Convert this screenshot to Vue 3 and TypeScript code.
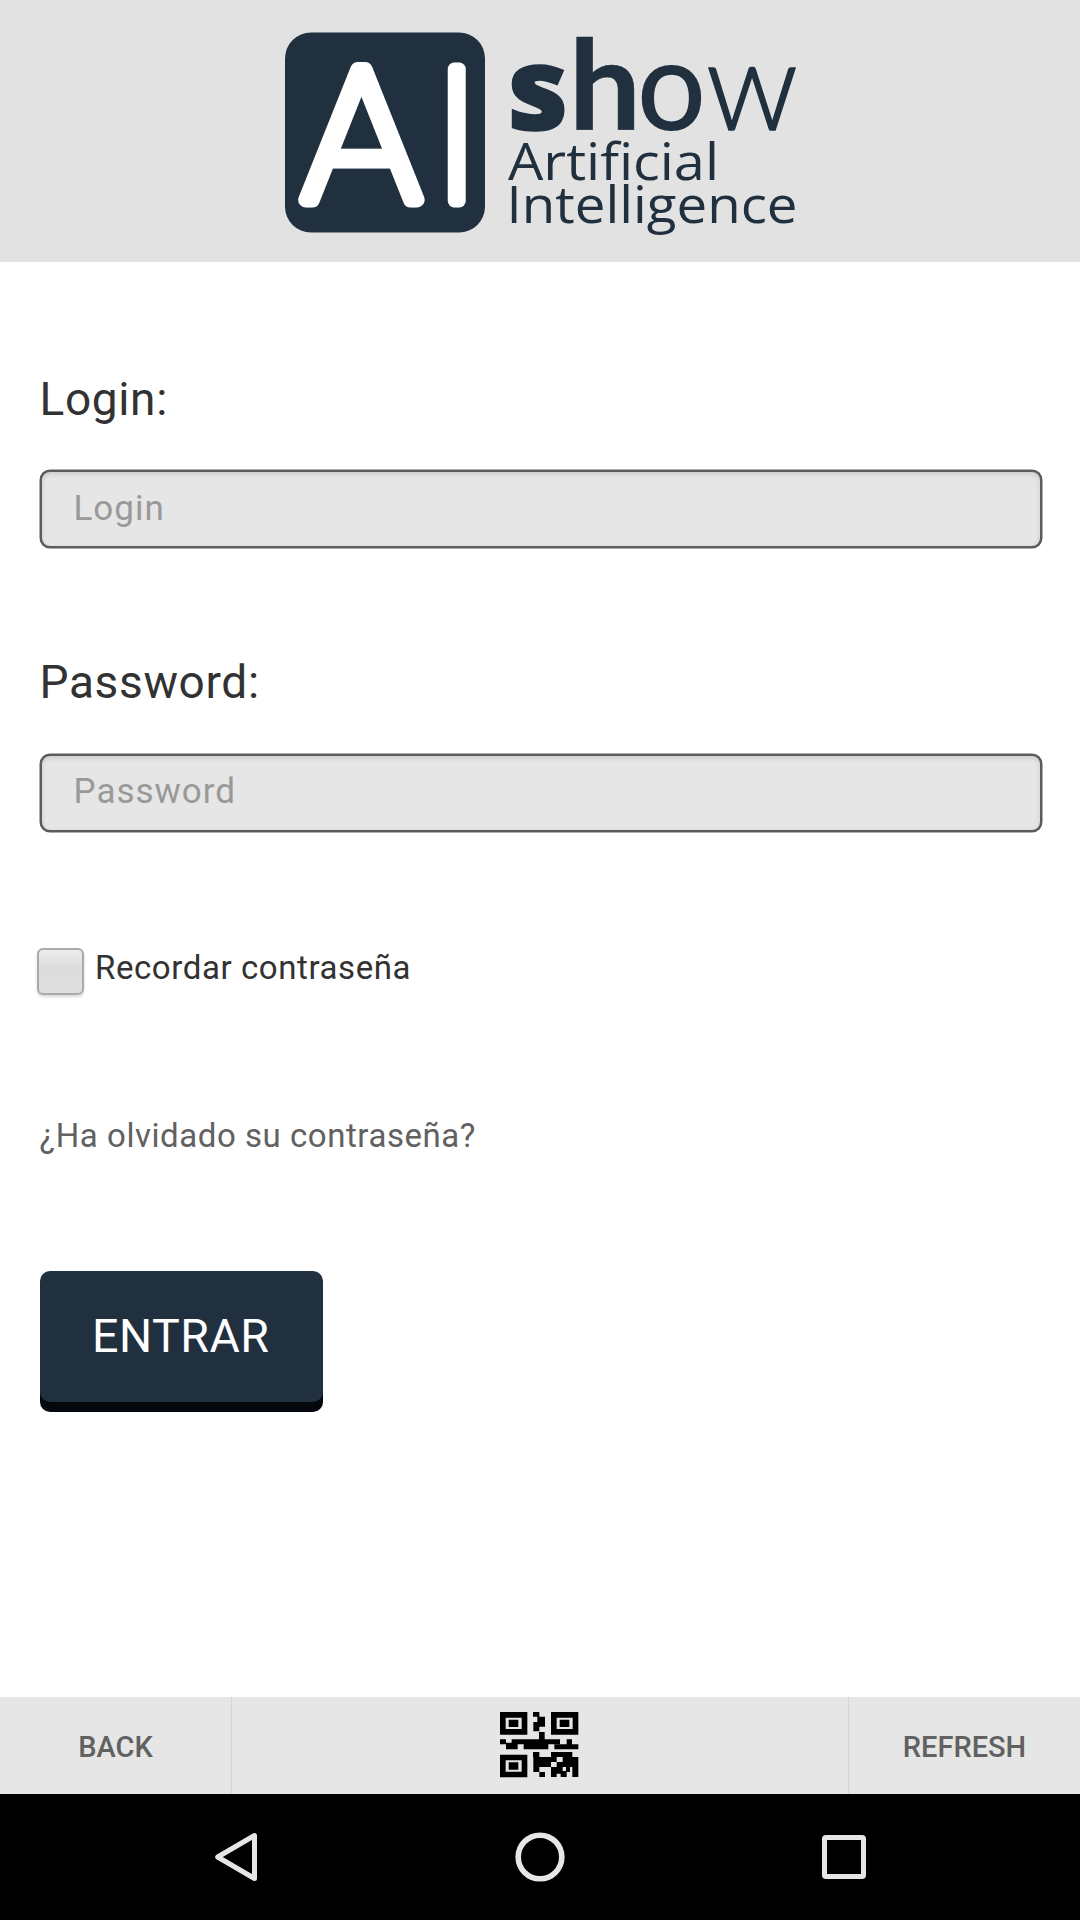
<script setup lang="ts">
import { ref } from 'vue'

interface Field {
  id: string
  label: string
  type: string
}

const fields: Field[] = [
  { id: 'login', label: 'Login', type: 'text' },
  { id: 'password', label: 'Password', type: 'password' },
]
const values = ref<Record<string, string>>({ login: '', password: '' })
const remember = ref(false)
</script>

<template>
  <div class="screen">
    <header class="header">
      <svg class="logo" width="520" height="220" viewBox="280 20 520 220">
        <rect x="285" y="32.500" width="200" height="200" rx="26" fill="#20303f" />
        <g class="mark">
          <text class="mark-a" x="303" y="199.500" font-size="184" textLength="117" lengthAdjust="spacingAndGlyphs">A</text>
          <text x="432.500" y="200.500" font-size="186">I</text>
        </g>
        <g class="word">
          <text class="heavy" x="507.500" y="129.500" font-weight="800" textLength="61" lengthAdjust="spacingAndGlyphs">s</text>
          <text class="tall" x="569" y="130" font-weight="700" textLength="72" lengthAdjust="spacingAndGlyphs">h</text>
          <text x="637" y="130" font-weight="500" textLength="69" lengthAdjust="spacingAndGlyphs">o</text>
          <text class="thin" x="706" y="130" font-weight="300" textLength="92" lengthAdjust="spacingAndGlyphs">w</text>
        </g>
        <g class="sub">
          <text x="508" y="180" textLength="211" lengthAdjust="spacingAndGlyphs">Artificial</text>
          <text x="506.500" y="223" textLength="291" lengthAdjust="spacingAndGlyphs">Intelligence</text>
        </g>
      </svg>
    </header>

    <form class="form" @submit.prevent>
      <div v-for="f in fields" :key="f.id" class="field">
        <label class="label" :for="f.id">{{ f.label }}:</label>
        <input :id="f.id" v-model="values[f.id]" class="input" :type="f.type" :placeholder="f.label" />
      </div>
      <label class="remember">
        <input v-model="remember" class="check" type="checkbox" />
        <span>Recordar contraseña</span>
      </label>
      <a class="forgot">¿Ha olvidado su contraseña?</a>
      <button class="submit" type="submit">ENTRAR</button>
    </form>

    <footer class="toolbar">
      <button class="tool left" type="button">BACK</button>
      <div class="middle">
        <svg width="79" height="66" viewBox="60 66 237 198">
          <g fill="none" stroke="#000">
            <path stroke-width="17" d="M68.500 74.500h65v51h-65zM221.500 74.500h65v51h-65zM68.500 202.500h65v51h-65z" />
          </g>
          <path d="M86 89h29v22H86zM239 89h29v22h-29zM86 217h29v22H86z" />
          <path d="M159 66h19v14h17v30h-17v14h-18V96h12V80h-13z" />
          <path d="M177 126h17v22h46v15h-35v15h-74v-15h-18v15H78v-15H60v-15h18v10h17v-10h82z" />
          <path d="M260 148h16v15h19v15h-72v-15h37z" />
          <path d="M159 186h19v15h35v-15h64v15h18v45h-18v-15h-7v15h-10v15h-18v-10h-12v10h-17v-30h-35v15h-18v-45h-1z" />
          <path d="M178 246h17v15h-17zM277 246h18v15h-18z" />
          <path fill="#e6e6e6" d="M230 201h18v15h-18zM213 216h17v15h-17zM248 231h10v12h-10z" />
        </svg>
      </div>
      <button class="tool right" type="button">REFRESH</button>
    </footer>

    <nav class="nav">
      <svg width="1080" height="126" viewBox="0 1794 1080 126" fill="none" stroke="#e6e6e6" stroke-width="5" stroke-linejoin="round">
        <path d="M254.500 1835.500v43L217.700 1857z" />
        <circle cx="540" cy="1857" r="21.800" stroke-width="5.600" />
        <rect x="824.500" y="1837.500" width="39" height="39" rx="1.500" />
      </svg>
    </nav>
  </div>
</template>

<style>
body {
  margin: 0;
}
</style>

<style scoped>
.screen {
  width: 1080px;
  height: 1920px;
  display: flex;
  flex-direction: column;
  background: #fff;
  font-family: Roboto, sans-serif;
  color: #323232;
  overflow: hidden;
}
.header {
  height: 262px;
  flex: none;
  box-sizing: border-box;
  padding-top: 20px;
  display: flex;
  justify-content: center;
  align-items: flex-start;
  background: #e2e2e2;
}
.logo {
  overflow: visible;
}
.mark {
  font-family: Roboto, sans-serif;
  font-weight: 100;
  fill: #fff;
  stroke: #fff;
  stroke-width: 13px;
  stroke-linejoin: round;
}
.mark-a {
  stroke-width: 15px;
}
.word {
  font-family: Lato, sans-serif;
  font-size: 125px;
  fill: #20303f;
  stroke: #20303f;
  stroke-width: 0;
}
.heavy {
  font-family: 'Open Sans', sans-serif;
  font-size: 115px;
  stroke-width: 1.5px;
}
.tall {
  stroke-width: 0.6px;
}
.thin {
  stroke-width: 1.6px;
}
.sub {
  font-family: 'Open Sans', sans-serif;
  font-size: 52px;
  fill: #20303f;
}
.form {
  flex: 1;
  display: flex;
  flex-direction: column;
  align-items: flex-start;
  padding: 110px 38.5px 0 39.5px;
}
.field {
  width: 100%;
  display: flex;
  flex-direction: column;
  margin-bottom: 107px;
}
.label {
  font-size: 46px;
  line-height: 54px;
  letter-spacing: 0.65px;
  margin-bottom: 44px;
}
.field + .field .label {
  margin-bottom: 45px;
}
.input {
  height: 78px;
  box-sizing: border-box;
  border: 2px solid #5c5c5c;
  border-radius: 10px;
  background: #e6e6e6;
  box-shadow: inset 0 2px 5px rgba(0, 0, 0, 0.12), 0 0 0 0.5px #5c5c5c;
  padding: 0 32px 1px;
  font: 35px Roboto, sans-serif;
  letter-spacing: 1px;
  outline: none;
}
.field + .field .input {
  padding-bottom: 3px;
}
.input::placeholder {
  color: #999;
}
.remember {
  display: flex;
  align-items: flex-start;
  gap: 11px;
  margin: 9px 0 0 -2.5px;
  font-size: 33px;
  line-height: 40px;
  letter-spacing: 0.58px;
}
.check {
  appearance: none;
  width: 47px;
  height: 47px;
  margin: 0;
  box-sizing: border-box;
  border: 2px solid #aaa;
  border-radius: 6px;
  background: linear-gradient(#ededed, #dcdcdc 40%, #dedede);
  box-shadow: 0 2px 3px rgba(0, 0, 0, 0.15);
}
.forgot {
  margin-top: 121px;
  font-size: 33px;
  line-height: 40px;
  letter-spacing: 0.55px;
  color: #616161;
}
.submit {
  margin-top: 115px;
  width: 283.500px;
  height: 131px;
  border: 0;
  border-radius: 10px;
  background: #20303f;
  box-shadow: 0 10px 0 #04070c;
  color: #fff;
  font: 46.500px Roboto, sans-serif;
  letter-spacing: 0.5px;
  padding: 0 1px 2px 0;
}
.toolbar {
  height: 97px;
  flex: none;
  display: flex;
  background: #e6e6e6;
}
.tool {
  width: 232px;
  border: 0;
  padding: 2px 0 0;
  background: transparent;
  color: #616161;
  font: 500 29px Roboto, sans-serif;
}
.left {
  border-right: 1px solid #d4d4d4;
}
.right {
  border-left: 1px solid #d4d4d4;
}
.middle {
  flex: 1;
  padding: 15px 2px 0 0;
  display: flex;
  justify-content: center;
  align-items: flex-start;
}
.nav {
  height: 126px;
  flex: none;
  background: #000;
}
.nav svg {
  display: block;
}
</style>
